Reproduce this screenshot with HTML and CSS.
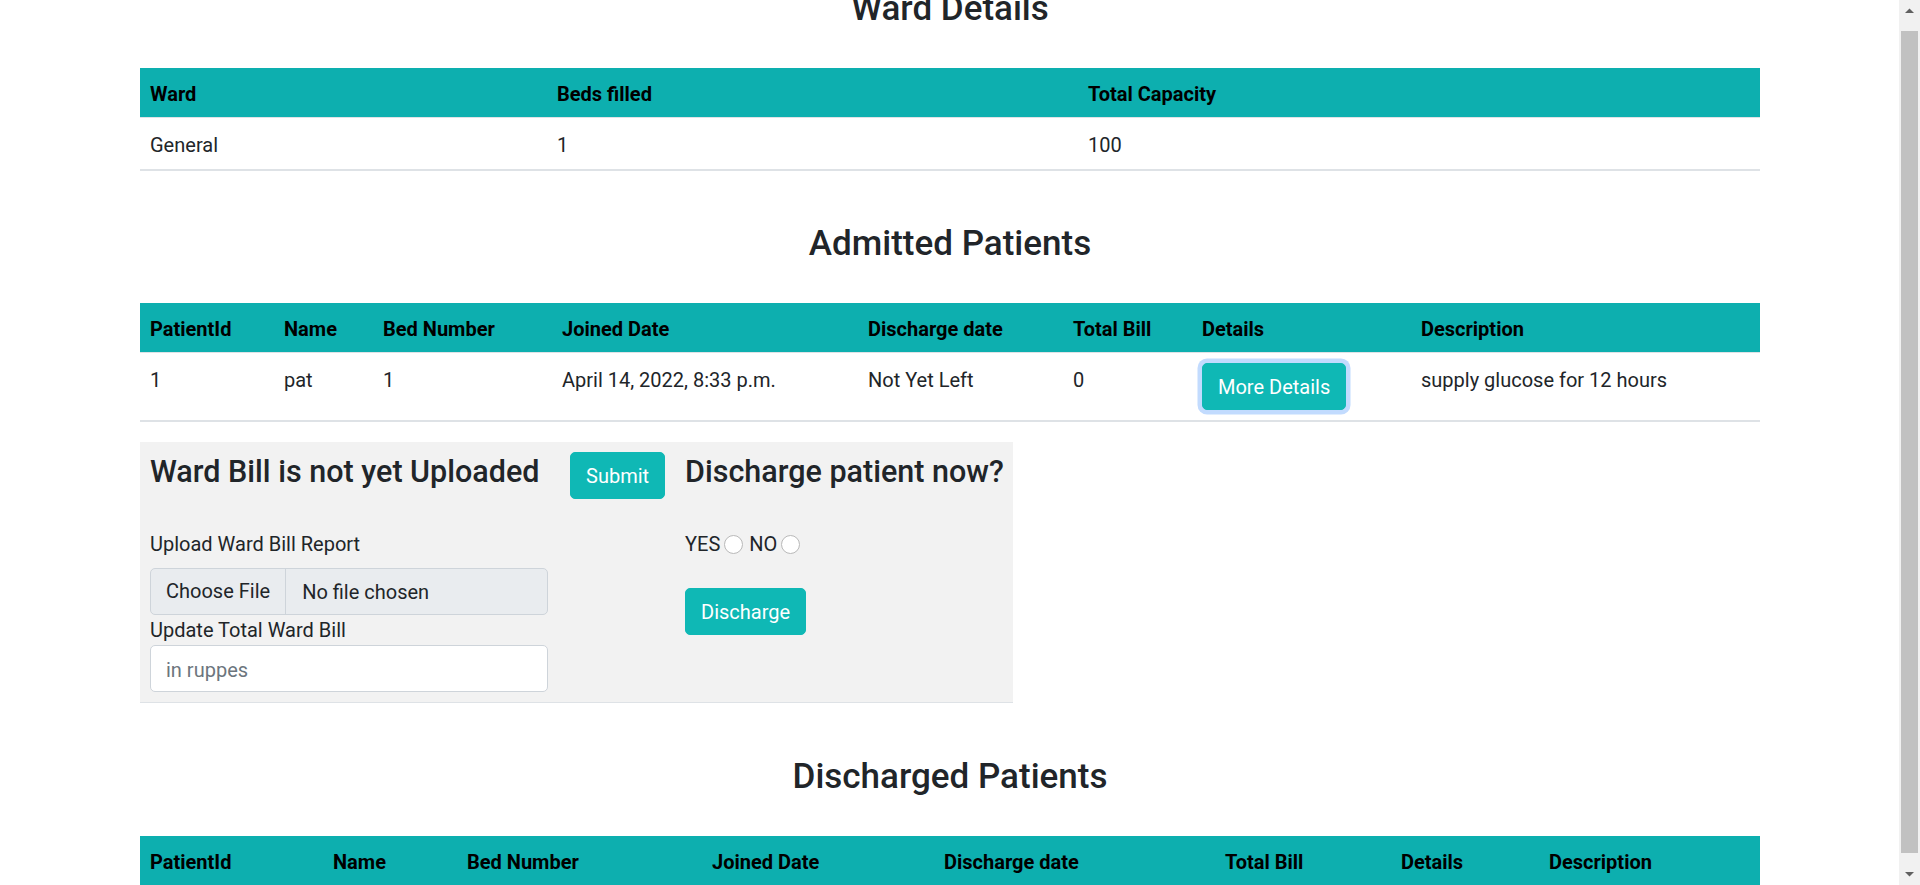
FILE: index.html
```html
<!DOCTYPE html>
<html lang="en">
<head>
<meta charset="utf-8">
<title>Ward Details</title>
<link rel="stylesheet" href="styles.css">
</head>
<body>
<div class="page">
  <h3 class="section-title">Ward Details</h3>
  <table class="data ward">
    <colgroup><col class="w-ward"><col class="w-beds"><col class="w-cap"></colgroup>
    <thead><tr><th>Ward</th><th>Beds filled</th><th>Total Capacity</th></tr></thead>
    <tbody><tr><td>General</td><td>1</td><td>100</td></tr></tbody>
  </table>

  <h3 class="section-title">Admitted Patients</h3>
  <table class="data admitted">
    <colgroup>
      <col class="a-id"><col class="a-name"><col class="a-bed"><col class="a-join">
      <col class="a-dis"><col class="a-bill"><col class="a-det"><col class="a-desc">
    </colgroup>
    <thead><tr><th>PatientId</th><th>Name</th><th>Bed Number</th><th>Joined Date</th><th>Discharge date</th><th>Total Bill</th><th>Details</th><th>Description</th></tr></thead>
    <tbody><tr><td>1</td><td>pat</td><td>1</td><td>April 14, 2022, 8:33 p.m.</td><td>Not Yet Left</td><td>0</td><td class="td-action"><button class="btn btn-focus" type="button">More Details</button></td><td>supply glucose for 12 hours</td></tr></tbody>
  </table>

  <div class="bill-box">
    <div class="cell cell-form">
      <h4 class="box-title">Ward Bill is not yet Uploaded</h4>
      <label class="form-label">Upload Ward Bill Report</label>
      <div class="file-input"><span class="file-btn">Choose File</span><span class="file-name">No file chosen</span></div>
      <label class="form-label tight">Update Total Ward Bill</label>
      <input class="text-input" type="text" placeholder="in ruppes">
    </div>
    <div class="cell cell-submit"><button class="btn" type="button">Submit</button></div>
    <div class="cell cell-discharge">
      <h4 class="box-title">Discharge patient now?</h4>
      <div class="radios"><span>YES</span><input class="radio r-yes" type="radio" name="dis"><span>NO</span><input class="radio r-no" type="radio" name="dis"></div>
      <button class="btn btn-discharge" type="button">Discharge</button>
    </div>
  </div>

  <h3 class="section-title">Discharged Patients</h3>
  <table class="data discharged">
    <colgroup>
      <col class="d-id"><col class="d-name"><col class="d-bed"><col class="d-join">
      <col class="d-dis"><col class="d-bill"><col class="d-det"><col class="d-desc">
    </colgroup>
    <thead><tr><th>PatientId</th><th>Name</th><th>Bed Number</th><th>Joined Date</th><th>Discharge date</th><th>Total Bill</th><th>Details</th><th>Description</th></tr></thead>
    <tbody></tbody>
  </table>
</div>

<div class="scrollbar" aria-hidden="true">
  <div class="sb-btn"><svg width="9" height="5" viewBox="0 0 9 5"><path d="M0 5 L4.5 0.5 L9 5 Z" fill="#606060"/></svg></div>
  <div class="sb-track"><div class="sb-thumb"></div></div>
  <div class="sb-btn"><svg width="9" height="5" viewBox="0 0 9 5"><path d="M0 0 L4.5 4.5 L9 0 Z" fill="#606060"/></svg></div>
</div>
</body>
</html>
```
FILE: styles.css
```css
html {
  background: #fff;
}

body {
  margin: 0;
  font-family: Roboto, "Liberation Sans", sans-serif;
  font-size: 20px;
  line-height: 30px;
  color: #212529;
}

.page {
  width: 1620px;
  margin: -12px 0 0 140px;
  padding-bottom: 1px;
}

.section-title {
  margin: 52px 0 38px;
  font-size: 35px;
  line-height: 42px;
  font-weight: 500;
  text-align: center;
  color: #212529;
}
.page > .section-title:first-child {
  margin-top: 0;
}

/* tables */
.data {
  width: 100%;
  table-layout: fixed;
  border-collapse: collapse;
  margin-bottom: 20px;
}
.data th {
  background: #0dafaf;
  color: #000;
  font-weight: 700;
  text-align: left;
  padding: 12px 10px 8px;
  line-height: 29px;
  border-bottom: 1px solid #dee2e6;
}
.data td {
  padding: 12px 10px 9px;
  line-height: 30px;
  vertical-align: top;
  border-bottom: 2px solid #dee2e6;
}
.data td.td-action {
  padding-top: 10px;
  padding-bottom: 10px;
}

.w-ward { width: 407px; }
.w-beds { width: 531px; }
.w-cap { width: 682px; }

.a-id { width: 134px; }
.a-name { width: 99px; }
.a-bed { width: 179px; }
.a-join { width: 306px; }
.a-dis { width: 205px; }
.a-bill { width: 129px; }
.a-det { width: 219px; }
.a-desc { width: 349px; }

.d-id { width: 183px; }
.d-name { width: 134px; }
.d-bed { width: 245px; }
.d-join { width: 232px; }
.d-dis { width: 281px; }
.d-bill { width: 176px; }
.d-det { width: 148px; }
.d-desc { width: 221px; }

/* buttons */
.btn {
  display: inline-block;
  box-sizing: border-box;
  height: 47px;
  padding: 2px 15px 0;
  font-family: Roboto, "Liberation Sans", sans-serif;
  font-size: 20px;
  line-height: 43px;
  color: #fff;
  background: #0fb8b5;
  border: 1px solid #0fb8b5;
  border-radius: 5px;
  cursor: pointer;
}
.btn-focus {
  box-shadow: 0 0 0 4.5px #c2dbfe;
}

/* bill box */
.bill-box {
  display: grid;
  grid-template-columns: 418px 117px 338px;
  width: 873px;
  background: #f2f2f2;
  border-bottom: 1px solid #dee2e6;
  margin-bottom: 53px;
}
.cell {
  padding: 10px;
}
.cell-submit {
  padding-left: 12px;
}
.box-title {
  margin: 2px 0 39px;
  font-size: 30.5px;
  line-height: 36px;
  font-weight: 500;
  color: #212529;
  white-space: nowrap;
}
.form-label {
  display: block;
  margin-bottom: 9px;
}
.form-label.tight {
  margin-bottom: 0;
}
.file-input {
  display: flex;
  box-sizing: border-box;
  height: 47px;
  padding-top: 2px;
  line-height: 43px;
  background: #e9ecef;
  border: 1px solid #ced4da;
  border-radius: 5px;
}
.file-btn {
  padding: 0 15px;
  border-right: 1px solid #ced4da;
  margin-top: -2px;
  line-height: 45px;
}
.file-name {
  padding: 0 16px;
}
.text-input {
  display: block;
  box-sizing: border-box;
  width: 100%;
  height: 47px;
  margin: 0;
  padding: 2px 15px 0;
  font-family: Roboto, "Liberation Sans", sans-serif;
  font-size: 20px;
  color: #212529;
  background: #fff;
  border: 1px solid #ced4da;
  border-radius: 5px;
}
.text-input::placeholder {
  color: #6c757d;
}

.radios {
  display: flex;
  align-items: center;
  height: 30px;
}
.radio {
  appearance: none;
  -webkit-appearance: none;
  box-sizing: border-box;
  width: 19px;
  height: 19px;
  margin: 0 6px 0 4px;
  background: #fff;
  border: 1px solid #b9b9b9;
  border-radius: 50%;
}
.r-no {
  margin-left: 4px;
}
.btn-discharge {
  margin-top: 29px;
}

/* window scrollbar drawn over the right edge */
.scrollbar {
  position: fixed;
  top: 0;
  right: 0;
  width: 21px;
  height: 100vh;
  display: flex;
  flex-direction: column;
  background: #f1f1f1;
}
.sb-btn {
  height: 21px;
  display: flex;
  align-items: center;
  justify-content: center;
}
.sb-track {
  flex: 1;
  padding: 10px 2px 0;
}
.sb-thumb {
  height: 822px;
  background: #c1c1c1;
}
```
